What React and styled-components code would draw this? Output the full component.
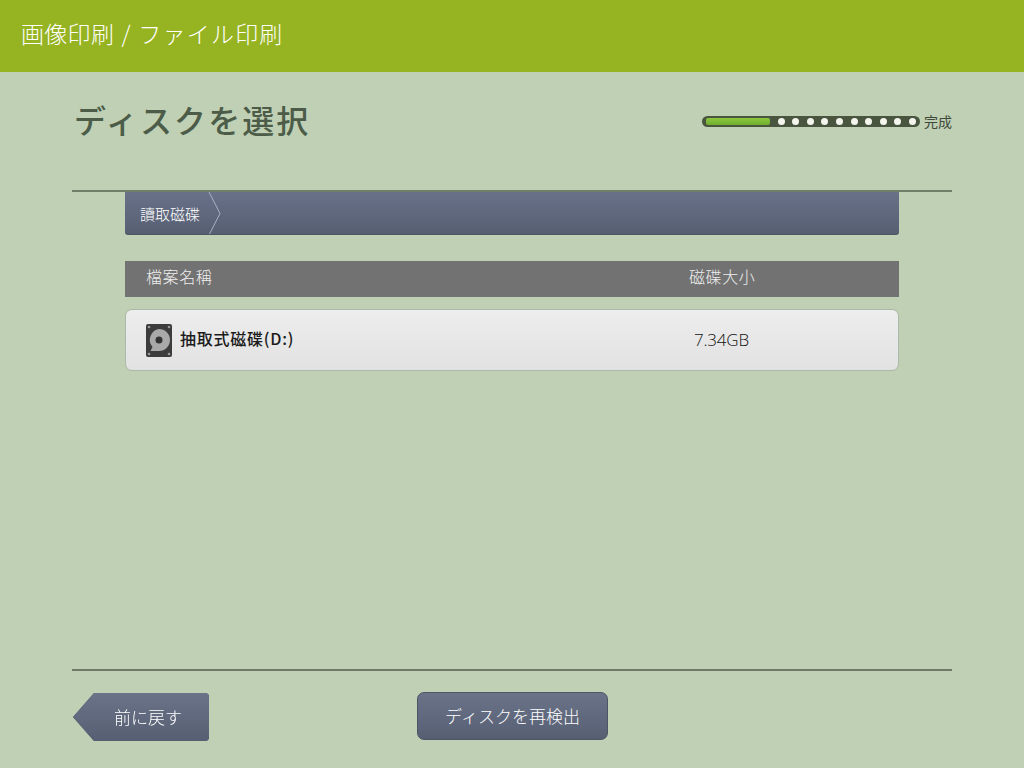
import React from 'react'
import styled, { createGlobalStyle } from 'styled-components'

const GlobalStyle = createGlobalStyle`
    html, body {
        margin: 0;
        padding: 0;
        height: 100%;
        background: #bfd0b4;
        font-family: "Noto Sans CJK JP", "Noto Sans CJK TC", "Liberation Sans", sans-serif;
    }
`
const Page = styled.div`
    width: 1024px;
    height: 768px;
    overflow: hidden;
    display: flex;
    flex-direction: column;
`
const TopBar = styled.div`
    height: 72px;
    background: #96b321;
    color: #fff;
    font-size: 23px;
    font-weight: 300;
    letter-spacing: 0.3px;
    word-spacing: 2px;
    line-height: 67px;
    padding-left: 21px;
    span {
        letter-spacing: 1.2px;
    }
`
const Content = styled.div`
    margin: 0 72px;
    flex: 1;
    display: flex;
    flex-direction: column;
`
const TitleRow = styled.div`
    display: flex;
    justify-content: space-between;
    align-items: flex-start;
    border-bottom: 2px solid #6f7f68;
    box-sizing: border-box;
    height: 120px;
`
const Title = styled.h1`
    margin: 24px 0 0 2px;
    font-size: 32px;
    line-height: 46px;
    font-weight: 500;
    letter-spacing: 2.1px;
    color: #4c5c48;
`
const Progress = styled.div`
    display: flex;
    align-items: center;
    margin-top: 43px;
    gap: 4px;
`
const Track = styled.div`
    position: relative;
    width: 218px;
    height: 11px;
    border-radius: 6px;
    background: #49553f;
    display: flex;
    align-items: center;
    justify-content: flex-end;
    gap: 7.6px;
    padding-right: 4px;
    box-sizing: border-box;
`
const Dot = styled.span`
    width: 7px;
    height: 7px;
    border-radius: 50%;
    background: #f4f6ee;
`
const Fill = styled.span`
    position: absolute;
    left: 4px;
    top: 2px;
    width: 64px;
    height: 7px;
    border-radius: 2px;
    background: linear-gradient(#8cc63e, #6fae2e);
`
const ProgressLabel = styled.span`
    font-size: 14px;
    line-height: 12px;
    color: #3f4a3b;
`
const Panel = styled.div`
    margin: 0 53px;
    flex: 1;
    display: flex;
    flex-direction: column;
`
const Crumbs = styled.div`
    height: 43px;
    background: linear-gradient(#687188, #565f72);
    border-radius: 0 0 3px 3px;
    border-bottom: 1px solid #4e5666;
    box-sizing: border-box;
    display: flex;
    overflow: hidden;
`
const Crumb = styled.div`
    position: relative;
    width: 97px;
    padding-left: 15px;
    box-sizing: border-box;
    color: #fff;
    font-size: 15px;
    font-weight: 300;
    line-height: 44px;
    svg {
        position: absolute;
        right: 0;
        top: 0;
    }
`
const TableHead = styled.div`
    margin-top: 26px;
    height: 36px;
    background: #727272;
    color: #eee;
    font-size: 16px;
    font-weight: 300;
    letter-spacing: 0.6px;
    line-height: 31px;
    display: grid;
    grid-template-columns: 543px 1fr;
    padding-left: 21px;
`
const Row = styled.div`
    margin-top: 12px;
    height: 62px;
    box-sizing: border-box;
    border: 1px solid #aeb8a8;
    border-radius: 7px;
    background: linear-gradient(#ededed, #e2e2e2);
    display: grid;
    grid-template-columns: 548px 1fr;
    align-items: center;
    padding-left: 20px;
`
const NameCell = styled.div`
    display: flex;
    align-items: center;
    gap: 8px;
    font-size: 16px;
    font-weight: 500;
    letter-spacing: 0.75px;
    line-height: 20px;
    color: #1c1c1c;
    span {
        margin-top: -5px;
    }
`
const SizeCell = styled.div`
    font-family: "Open Sans", "Liberation Sans", sans-serif;
    font-size: 17px;
    font-weight: 300;
    letter-spacing: -0.2px;
    color: #111;
    margin-top: -1px;
`
const Footer = styled.div`
    height: 99px;
    border-top: 2px solid #6f7a68;
    box-sizing: border-box;
    display: flex;
    align-items: flex-start;
    padding-top: 21px;
`
const Button = styled.button`
    height: 48px;
    border: 1px solid #4e5666;
    border-radius: 7px;
    background: linear-gradient(#6b7389, #565f72);
    color: #fff;
    font-family: inherit;
    font-size: 17px;
    line-height: 44px;
    font-weight: 300;
    padding: 0;
    margin-left: ${p => p.$offset}px;
    width: ${p => p.$width}px;
`
const BackWrap = styled.div`
    margin-top: 1px;
    filter: drop-shadow(0 0 0.6px #4e5666);
`
const BackButton = styled(Button)`
    display: block;
    border: none;
    border-radius: 0 4px 4px 0;
    padding-left: 14px;
    clip-path: polygon(0 50%, 21px 0, 100% 0, 100% 100%, 21px 100%);
`

const DriveIcon = () => (
    <svg width="26" height="33" viewBox="0 0 26 33">
        <rect width="26" height="33" rx="2" fill="#3c3c3c" />
        <path d="M13 5a11 11 0 0 1 0 22H4.5l2-4A11 11 0 0 1 13 5z" fill="#a9a9a9" />
        <circle cx="13" cy="16" r="3.5" fill="#333" />
        <circle cx="3" cy="3" r="1.3" fill="#999" />
        <circle cx="23" cy="3" r="1.3" fill="#999" />
        <circle cx="3" cy="30" r="1.3" fill="#999" />
        <circle cx="23" cy="30" r="1.3" fill="#999" />
    </svg>
)

const App = () => {
    const dots = Array.from({ length: 10 }, (_, i) => <Dot key={i} />)

    return (
        <Page>
            <GlobalStyle />
            <TopBar>画像印刷 / <span>ファイル印刷</span></TopBar>
            <Content>
                <TitleRow>
                    <Title>ディスクを選択</Title>
                    <Progress>
                        <Track>
                            <Fill />
                            {dots}
                        </Track>
                        <ProgressLabel>完成</ProgressLabel>
                    </Progress>
                </TitleRow>
                <Panel>
                    <Crumbs>
                        <Crumb>
                            讀取磁碟
                            <svg width="14" height="43" viewBox="0 0 14 43">
                                <path d="M1 0l11 21.5L1 43" fill="none" stroke="#aab2c0" strokeWidth="1" />
                            </svg>
                        </Crumb>
                    </Crumbs>
                    <TableHead>
                        <span>檔案名稱</span>
                        <span>磁碟大小</span>
                    </TableHead>
                    <Row>
                        <NameCell>
                            <DriveIcon />
                            <span>抽取式磁碟(D:)</span>
                        </NameCell>
                        <SizeCell>7.34GB</SizeCell>
                    </Row>
                </Panel>
                <Footer>
                    <BackWrap>
                        <BackButton $width={136} $offset={1}>前に戻す</BackButton>
                    </BackWrap>
                    <Button $width={191} $offset={208}>ディスクを再検出</Button>
                </Footer>
            </Content>
        </Page>
    )
}

export default App
